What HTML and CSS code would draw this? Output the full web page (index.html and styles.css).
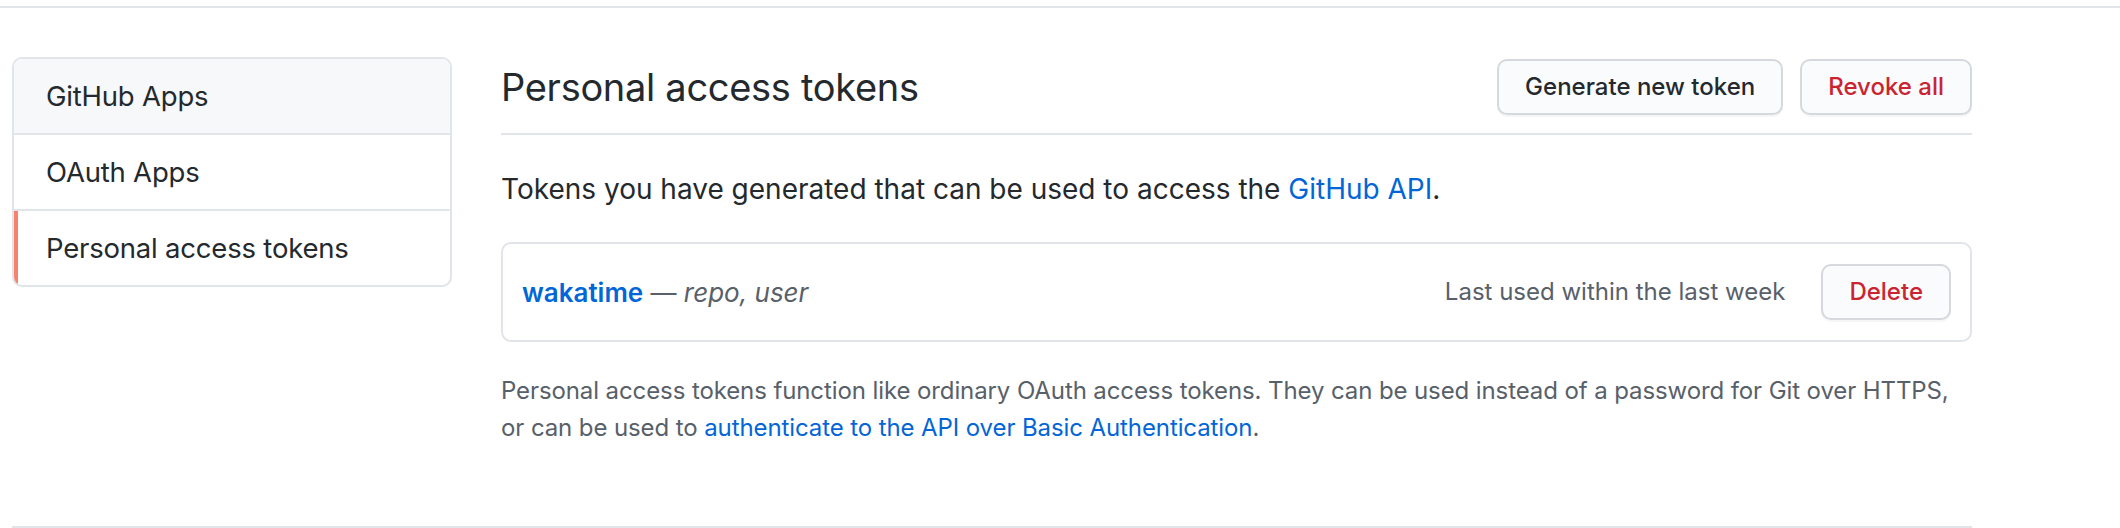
FILE: index.html
```html
<!DOCTYPE html>
<html lang="en">
<head>
<meta charset="utf-8">
<title>Personal access tokens</title>
<link rel="stylesheet" href="styles.css">
</head>
<body>
<div class="topline"></div>
<div class="page">
  <div class="layout">
    <nav class="menu">
      <a class="menu-item is-hover" href="#">GitHub Apps</a>
      <a class="menu-item" href="#">OAuth Apps</a>
      <a class="menu-item selected" href="#">Personal access tokens</a>
    </nav>
    <main class="main">
      <div class="subhead">
        <h2 class="subhead-heading">Personal access tokens</h2>
        <div class="subhead-actions">
          <a class="btn" href="#">Generate new token</a>
          <button class="btn btn-danger" type="button">Revoke all</button>
        </div>
      </div>
      <p class="intro">Tokens you have generated that can be used to access the <a class="link" href="#">GitHub API</a>.</p>
      <div class="box">
        <div class="token-row">
          <span class="token-desc"><a class="token-name" href="#">wakatime</a> — <em class="scopes">repo, user</em></span>
          <span class="last-used">Last used within the last week</span>
          <button class="btn btn-danger" type="button">Delete</button>
        </div>
      </div>
      <p class="note">Personal access tokens function like ordinary OAuth access tokens. They can be used instead of a password for Git over HTTPS,<br>or can be used to <a class="link" href="#">authenticate to the API over Basic Authentication</a>.</p>
    </main>
  </div>
  <div class="footer"></div>
</div>
</body>
</html>
```

FILE: styles.css
```css
* { box-sizing: border-box; }

html, body {
  margin: 0;
  padding: 0;
  background: #ffffff;
}

body {
  font-family: "Inter", "Liberation Sans", sans-serif;
  color: #24292e;
  font-size: 28px;
  line-height: 1.5;
}

a { text-decoration: none; }

.topline {
  height: 2px;
  margin-top: 6px;
  background: #e1e4e8;
}

.page {
  width: 1960px;
  margin-left: 12px;
  padding-top: 49px;
}

.layout {
  display: flex;
  align-items: flex-start;
}

/* Sidebar menu */
.menu {
  width: 440px;
  flex: 0 0 440px;
  border: 2px solid #e1e4e8;
  border-radius: 10px;
  overflow: hidden;
  display: flex;
  flex-direction: column;
}

.menu-item {
  position: relative;
  display: block;
  padding: 16px 32px;
  line-height: 42px;
  font-size: 27.5px;
  letter-spacing: -0.2px;
  color: #24292e;
  border-bottom: 2px solid #e1e4e8;
}

.menu-item:last-child { border-bottom: 0; }

.menu-item.is-hover { background: #f6f8fa; }

.menu-item.selected::before {
  content: "";
  position: absolute;
  left: 0;
  top: 0;
  bottom: 0;
  width: 4px;
  background: #f9826c;
}

/* Main column */
.main {
  flex: 1;
  margin-left: 49px;
}

.subhead {
  display: flex;
  align-items: center;
  padding: 2px 0 18px;
  border-bottom: 2px solid #e1e4e8;
}

.subhead-heading {
  flex: 1;
  margin: 0;
  font-size: 38px;
  font-weight: 400;
  letter-spacing: -0.3px;
  line-height: 56px;
}

.subhead-actions {
  display: flex;
  gap: 17px;
}

.btn {
  display: inline-block;
  font-family: inherit;
  font-size: 24px;
  font-weight: 500;
  line-height: 40px;
  padding: 6px 26px;
  color: #24292e;
  background: #fafbfc;
  border: 2px solid #d5d8dc;
  border-radius: 10px;
  box-shadow: 0 2px 0 rgba(27, 31, 35, 0.04);
  white-space: nowrap;
  cursor: pointer;
}

.btn-danger { color: #cb2431; }

.intro {
  margin: 33px 0 32px;
  line-height: 42px;
}

.link { color: #0366d6; }

.box {
  border: 2px solid #e1e4e8;
  border-radius: 10px;
}

.token-row {
  display: flex;
  align-items: center;
  padding: 20px 19px 20px;
}

.token-desc {
  flex: 1;
  font-size: 26px;
  color: #586069;
}

.token-name {
  color: #0366d6;
  font-weight: 600;
}

.scopes { font-style: italic; }

.last-used {
  color: #586069;
  font-size: 24px;
  margin-right: 36px;
}

.note {
  margin: 30px 0 0;
  font-size: 24px;
  letter-spacing: -0.1px;
  line-height: 37px;
  color: #586069;
}

.footer {
  margin-top: 80px;
  border-top: 2px solid #e1e4e8;
}
```
